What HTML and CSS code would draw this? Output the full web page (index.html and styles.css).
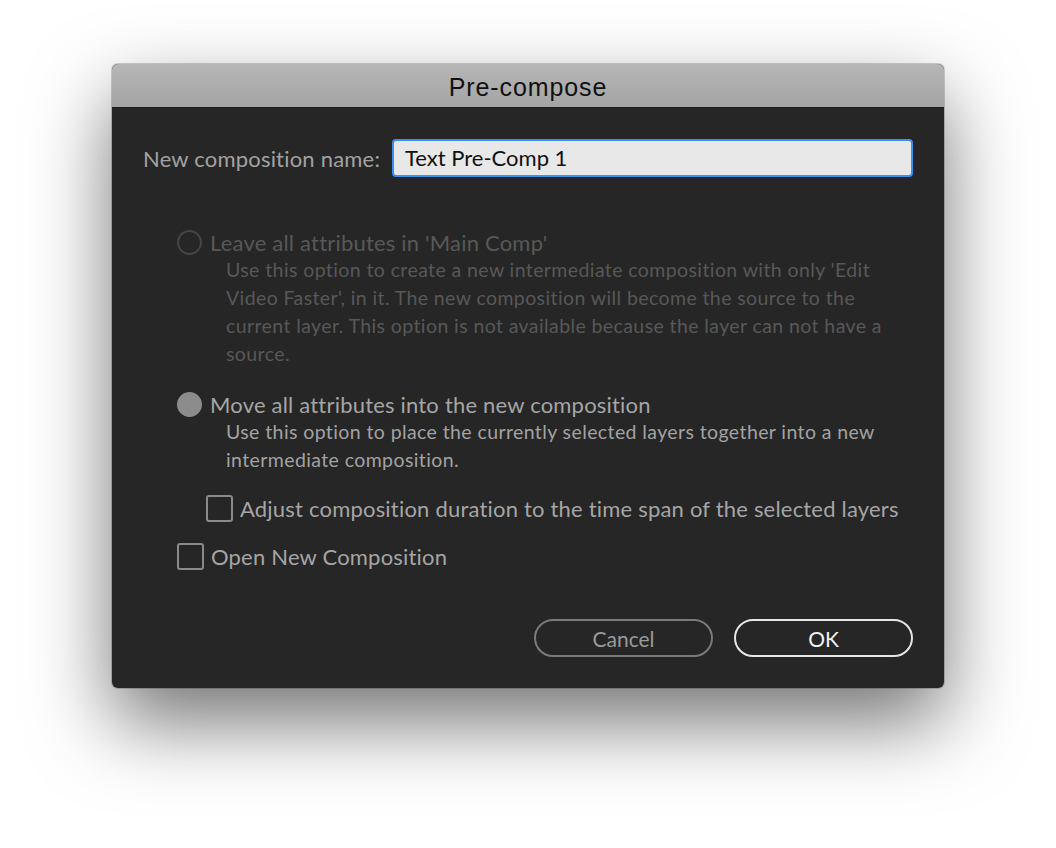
FILE: index.html
```html
<!DOCTYPE html>
<html>
<head>
<meta charset="utf-8">
<link rel="stylesheet" href="styles.css">
</head>
<body>
<div class="stage">
  <div class="dialog">
    <div class="titlebar">Pre-compose</div>
    <div class="content">
      <div class="name-row">
        <label class="name-label">New composition name:</label>
        <div class="name-input">Text Pre-Comp 1</div>
      </div>

      <div class="options">
        <div class="option disabled first">
          <div class="row">
            <span class="radio"></span>
            <span class="opt-label">Leave all attributes in 'Main Comp'</span>
          </div>
          <div class="desc">Use this option to create a new intermediate composition with only 'Edit<br>Video Faster', in it. The new composition will become the source to the<br>current layer. This option is not available because the layer can not have a<br>source.</div>
        </div>

        <div class="option second">
          <div class="row">
            <span class="radio checked"></span>
            <span class="opt-label">Move all attributes into the new composition</span>
          </div>
          <div class="desc">Use this option to place the currently selected layers together into a new<br>intermediate composition.</div>
        </div>

        <div class="row check-row indented">
          <span class="checkbox"></span>
          <span class="opt-label">Adjust composition duration to the time span of the selected layers</span>
        </div>

        <div class="row check-row">
          <span class="checkbox"></span>
          <span class="opt-label">Open New Composition</span>
        </div>
      </div>

      <div class="buttons">
        <button class="btn cancel">Cancel</button>
        <button class="btn ok">OK</button>
      </div>
    </div>
  </div>
</div>
</body>
</html>
```

FILE: styles.css
```css
html, body {
  margin: 0;
  padding: 0;
  background: #ffffff;
}

.stage {
  display: flex;
  justify-content: center;
  align-items: flex-start;
  padding-top: 64px;
  min-height: 100vh;
  box-sizing: border-box;
}

.dialog {
  width: 832px;
  border-radius: 6px;
  overflow: hidden;
  background: #262626;
  box-shadow: 0 34px 80px rgba(0, 0, 0, 0.55), 0 0 0 1px rgba(0, 0, 0, 0.18);
  font-family: Lato, "Open Sans", sans-serif;
}

.titlebar {
  height: 43px;
  border-bottom: 1px solid #1c1c1c;
  background: linear-gradient(#b6b6b6, #a4a4a4);
  color: #111;
  font-family: "Liberation Sans", Arial, sans-serif;
  font-size: 25px;
  letter-spacing: 0.9px;
  line-height: 46px;
  text-align: center;
}

.content {
  padding: 31px;
}

.name-row {
  display: flex;
  align-items: center;
  justify-content: space-between;
}

.name-label {
  color: #a2a2a2;
  font-size: 22px;
  letter-spacing: 0.2px;
}

.name-input {
  flex: none;
  width: 506px;
  height: 34px;
  border: 2px solid #3b8ff0;
  border-radius: 4px;
  background: #e8e8e8;
  color: #111;
  font-size: 22px;
  line-height: 34px;
  padding-left: 11px;
}

.options {
  padding-left: 34px;
  margin-top: 51px;
}

.row {
  display: flex;
  align-items: center;
  height: 28px;
  gap: 8px;
}

.opt-label {
  font-size: 22px;
  letter-spacing: 0.2px;
  color: #a5a5a5;
  white-space: nowrap;
}

.radio {
  width: 25px;
  height: 25px;
  box-sizing: border-box;
  border-radius: 50%;
  border: 2.5px solid #8c8c8c;
  flex: none;
}

.radio.checked {
  background: #8c8c8c;
}

.desc {
  margin-left: 49px;
  font-size: 19.5px;
  letter-spacing: 0.4px;
  line-height: 28px;
  color: #a2a2a2;
  white-space: nowrap;
}

.disabled .radio {
  border-color: #454545;
}

.disabled .opt-label,
.disabled .desc {
  color: #585858;
}

.second {
  margin-top: 22px;
}

.check-row {
  margin-top: 20px;
  gap: 7px;
}

.check-row.indented {
  margin-left: 29px;
}

.checkbox {
  width: 27px;
  height: 27px;
  box-sizing: border-box;
  border: 2.5px solid #8a8a8a;
  border-radius: 3px;
  flex: none;
}

.buttons {
  display: flex;
  justify-content: flex-end;
  gap: 21px;
  margin-top: 49px;
}

.btn {
  width: 179px;
  height: 38px;
  border-radius: 19px;
  background: transparent;
  font-family: Lato, "Open Sans", sans-serif;
  font-size: 21px;
  padding: 0;
  cursor: pointer;
}

.btn.cancel {
  border: 2px solid #7a7a7a;
  color: #9a9a9a;
}

.btn.ok {
  border: 2px solid #e6e6e6;
  color: #f2f2f2;
}
```
